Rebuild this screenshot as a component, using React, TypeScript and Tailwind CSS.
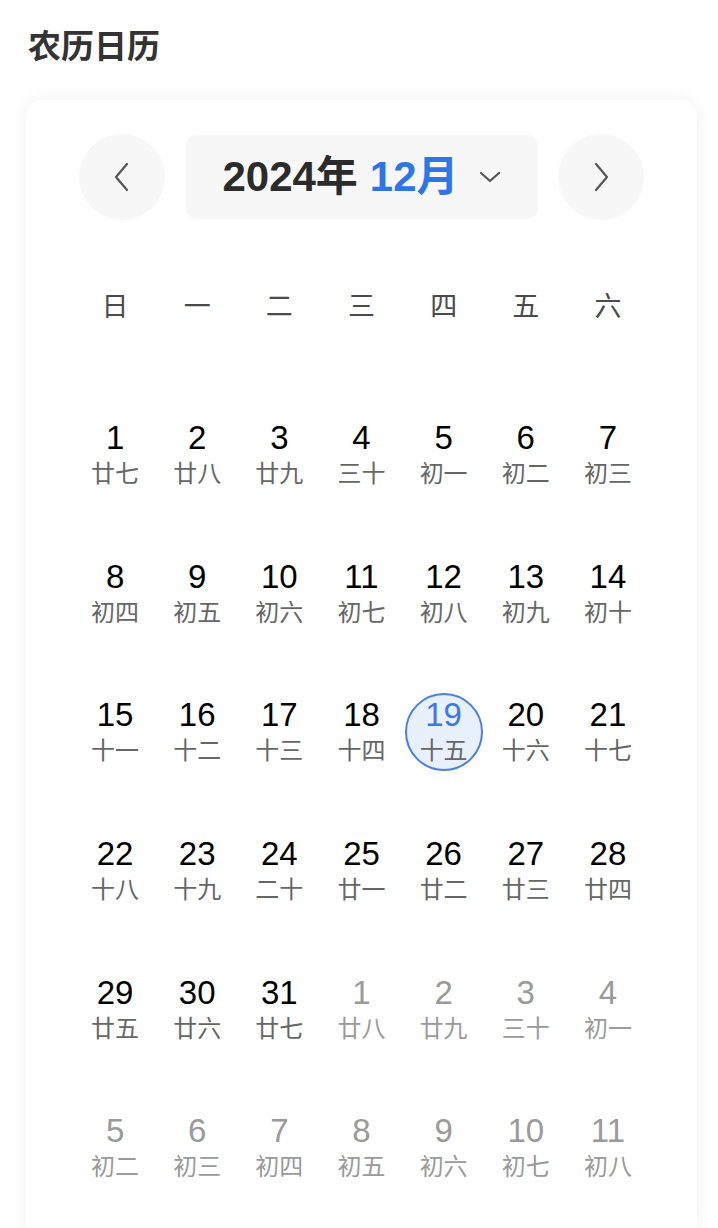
import React from "react";

type Day = { n: number; lunar: string; muted?: boolean; active?: boolean };

const weekdays = ["日", "一", "二", "三", "四", "五", "六"];

const lunarDec = [
  "廿七", "廿八", "廿九", "三十", "初一", "初二", "初三",
  "初四", "初五", "初六", "初七", "初八", "初九", "初十",
  "十一", "十二", "十三", "十四", "十五", "十六", "十七",
  "十八", "十九", "二十", "廿一", "廿二", "廿三", "廿四",
  "廿五", "廿六", "廿七",
];
const lunarNext = ["廿八", "廿九", "三十", "初一", "初二", "初三", "初四", "初五", "初六", "初七", "初八"];

const days: Day[] = [
  ...lunarDec.map((l, i) => ({ n: i + 1, lunar: l, active: i + 1 === 19 })),
  ...lunarNext.map((l, i) => ({ n: i + 1, lunar: l, muted: true })),
];

function Chevron({ dir }: { dir: "left" | "right" }) {
  return (
    <svg width="18" height="30" viewBox="0 0 18 30" fill="none">
      <polyline
        points={dir === "left" ? "14,2 3,15 14,28" : "4,2 15,15 4,28"}
        stroke="#555"
        strokeWidth="2.2"
        strokeLinecap="round"
        strokeLinejoin="round"
      />
    </svg>
  );
}

export default function App() {
  return (
    <div
      className="min-h-[1228px] bg-white"
      style={{ fontFamily: '"Liberation Sans", "Noto Sans CJK SC", sans-serif' }}
    >
      <h1 className="pl-[28px] pt-[26px] text-[33px] font-bold leading-[42px] text-[#333]">农历日历</h1>

      <div className="ml-[26px] mt-[32px] w-[671px] rounded-[16px] bg-white px-[48px] pt-[34px] pb-[20px] shadow-[0_0_18px_rgba(0,0,0,0.06)]">
        {/* month switcher */}
        <div className="flex items-center justify-between px-[5px]">
          <button className="flex h-[86px] w-[86px] items-center justify-center rounded-full bg-[#f7f7f7]">
            <Chevron dir="left" />
          </button>
          <div className="flex h-[84px] w-[352px] items-center justify-center rounded-[10px] bg-[#f7f7f7]">
            <span className="text-[42px] font-bold leading-none text-[#2b2b2b]">2024年</span>
            <span className="ml-[12px] text-[42px] font-bold leading-none text-[#2f75ea]">12月</span>
            <svg className="ml-[20px]" width="22" height="14" viewBox="0 0 22 14" fill="none">
              <polyline points="2,3 11,11 20,3" stroke="#555" strokeWidth="2.2" strokeLinecap="round" strokeLinejoin="round" />
            </svg>
          </div>
          <button className="flex h-[86px] w-[86px] items-center justify-center rounded-full bg-[#f7f7f7]">
            <Chevron dir="right" />
          </button>
        </div>

        {/* weekdays */}
        <div className="mt-[66px] grid h-[42px] grid-cols-7 items-center">
          {weekdays.map((w) => (
            <div key={w} className="text-center text-[27px] leading-none text-[#4a4a4a]">
              {w}
            </div>
          ))}
        </div>

        {/* days */}
        <div className="mt-[59px] grid grid-cols-7">
          {days.map((d, i) => (
            <div key={i} className="relative flex h-[138.6px] flex-col items-center justify-center">
              {d.active && (
                <div className="absolute left-1/2 top-1/2 h-[78px] w-[78px] -translate-x-1/2 -translate-y-[40px] rounded-full border-2 border-[#4a80e2] bg-[#e9f0fd]" />
              )}
              <span
                className={
                  "relative text-[33px] leading-[36px] " +
                  (d.active ? "text-[#3a7ae8]" : d.muted ? "text-[#9a9a9a]" : "text-black")
                }
              >
                {d.n}
              </span>
              <span
                className={
                  "relative text-[24px] leading-[36px] " + (d.muted ? "text-[#9a9a9a]" : "text-[#666]")
                }
              >
                {d.lunar}
              </span>
            </div>
          ))}
        </div>
      </div>
    </div>
  );
}
